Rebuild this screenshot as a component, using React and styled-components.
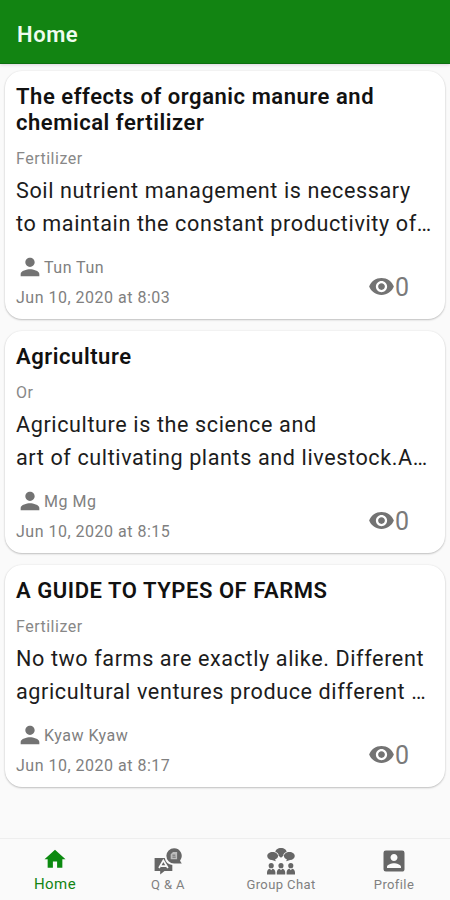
import React from "react";
import styled, { createGlobalStyle } from "styled-components";

const GlobalStyle = createGlobalStyle`
  body {
    margin: 0;
    background-color: #fafafa;
    font-family: Roboto, "Liberation Sans", sans-serif;
  }
`;
const Screen = styled.div`
  height: 900px;
  display: flex;
  flex-direction: column;
  overflow: hidden;
  background-color: #fafafa;
`;
const Header = styled.header`
  height: 64px;
  flex-shrink: 0;
  display: flex;
  align-items: center;
  padding: 6px 17px 0;
  box-sizing: border-box;
  background-color: #128412;
  border-bottom: 1px solid #0d6f10;
  box-shadow: 0 1px 3px rgba(60, 0, 60, 0.15);
`;
const HeaderTitle = styled.h1`
  margin: 0;
  font-size: 22px;
  font-weight: 600;
  letter-spacing: 0.55px;
  color: #effcef;
`;
const Feed = styled.main`
  flex: 1;
  display: flex;
  flex-direction: column;
  gap: 12px;
  padding: 7px 5px 0;
`;
const Card = styled.article`
  display: flex;
  flex-direction: column;
  padding: 13.25px 11px 10.5px;
  border-radius: 17px;
  background-color: white;
  box-shadow: 0 1px 2px rgba(0, 0, 0, 0.22), 0 0 2px rgba(0, 0, 0, 0.08);
`;
const Title = styled.h2`
  margin: 0;
  font-size: 22px;
  line-height: 25.5px;
  font-weight: 600;
  letter-spacing: 0.55px;
  white-space: pre-line;
  color: #111111;
`;
const Category = styled.span`
  margin-top: 13.5px;
  font-size: 16px;
  line-height: 20px;
  letter-spacing: 0.5px;
  color: #888888;
`;
const Excerpt = styled.p`
  margin: 5.25px 0 0;
  font-size: 21.6px;
  line-height: 33px;
  letter-spacing: 0.6px;
  white-space: pre;
  color: #1c1c1c;
`;
const CardFooter = styled.div`
  display: flex;
  align-items: center;
  justify-content: space-between;
  margin-top: 18px;
  padding-right: 25px;
`;
const Meta = styled.div`
  display: flex;
  flex-direction: column;
  gap: 10px;
`;
const MetaText = styled.div`
  display: flex;
  align-items: center;
  font-size: 16px;
  line-height: 20px;
  letter-spacing: 0.5px;
  color: #808080;
`;
const PersonIcon = styled.svg`
  width: 28px;
  height: 28px;
  margin: -5px 0 -3px;
  fill: #737373;
`;
const Views = styled.div`
  display: flex;
  align-items: center;
  padding-top: 10px;
  font-size: 25px;
  line-height: 30px;
  color: #7a7a7a;
`;
const EyeIcon = styled.svg`
  width: 27px;
  height: 27px;
  margin-top: -3px;
  fill: #737373;
`;
const TabBar = styled.nav`
  height: 62px;
  flex-shrink: 0;
  display: flex;
  box-sizing: border-box;
  margin: 0 -1px;
  border-top: 1px solid #eeeeee;
`;
const Tab = styled.button`
  flex: 1 1 0;
  min-width: 0;
  display: flex;
  flex-direction: column;
  align-items: center;
  padding: ${(props) => (props.$active ? "8px" : "9px")} 1px 0 0;
  border: none;
  background: none;
  font-family: inherit;
  font-size: ${(props) => (props.$active ? "15px" : "13px")};
  line-height: 18px;
  letter-spacing: 0.4px;
  color: ${(props) => (props.$active ? "#128412" : "#808080")};
`;
const TabIcon = styled.svg`
  width: 28px;
  height: 28px;
  margin-top: -1px;
  margin-bottom: 1px;
  fill: ${(props) => (props.$active ? "#0c8a10" : "#666666")};
`;

const posts = [
  {
    title: "The effects of organic manure and\nchemical fertilizer",
    category: "Fertilizer",
    excerpt:
      "Soil nutrient management is necessary\nto maintain the constant productivity of…",
    author: "Tun Tun",
    date: "Jun 10, 2020 at 8:03",
    views: 0,
  },
  {
    title: "Agriculture",
    category: "Or",
    excerpt:
      "Agriculture is the science and\nart of cultivating plants and livestock.A…",
    author: "Mg Mg",
    date: "Jun 10, 2020 at 8:15",
    views: 0,
  },
  {
    title: "A GUIDE TO TYPES OF FARMS",
    category: "Fertilizer",
    excerpt:
      "No two farms are exactly alike. Different\nagricultural ventures produce different …",
    author: "Kyaw Kyaw",
    date: "Jun 10, 2020 at 8:17",
    views: 0,
  },
];

const tabs = [
  {
    label: "Home",
    icon: (
      <path
        d="M10 20v-6h4v6h5v-8h3L12 3 2 12h3v8z"
        transform="translate(1.2 .6) scale(.9)"
      />
    ),
  },
  {
    label: "Q & A",
    icon: (
      <>
        <path d="M0.5 9.500h8.700a7.500 7.500 0 0 0 6.500 6V20.500H9L5.300 23.500v-3H.5z" />
        <path d="M17.200 1a6.600 6.600 0 1 0 0 13.200h6.600l-1.500-2.500A6.600 6.600 0 0 0 17.200 1z" />
        <path
          d="M4.300 18 8 11.500l3.900 6.500M6 16.300h4.500"
          fill="none"
          stroke="#fafafa"
          strokeWidth="1.5"
        />
        <path d="M14.300 10.400V6.200l2-1.900h3.500v6.100z" fill="#bdbdbd" />
        <path
          d="M15.800 7h2.500M15.800 8.700h2.800"
          fill="none"
          stroke="#666666"
          strokeWidth=".8"
        />
      </>
    ),
  },
  {
    label: "Group Chat",
    icon: (
      <>
        <path d="M12 .8c-2.800 0-4.800 1.500-4.800 3.400C9.200 4.700 10.200 6 9.900 7.400l2.100 1.900 2.100-1.900c-.3-1.400.7-2.700 2.700-3.200 0-1.900-2-3.400-4.800-3.400z" />
        <path d="M4.800 4.300C2.100 4.300.2 5.800.2 7.700s1.800 3.400 4 3.400l3.300 1.200-.5-1.700c1.500-.6 2.500-1.600 2.500-2.900 0-1.900-2-3.400-4.700-3.400z" />
        <path d="M19.200 4.300c2.700 0 4.600 1.500 4.600 3.400s-1.800 3.400-4 3.400l-3.300 1.200.5-1.700c-1.500-.6-2.500-1.600-2.500-2.900 0-1.900 2-3.400 4.700-3.400z" />
        {[3.6, 12, 20.4].map((x) => (
          <g key={x} transform={`translate(${x} 0)`}>
            <circle cx="0" cy="16" r="2.200" />
            <path d="M-3.600 23.500v-1.700c0-1.800 1.300-2.900 2.500-3.100L0 20l1.100-1.300c1.200.2 2.500 1.300 2.500 3.100v1.700z" />
          </g>
        ))}
      </>
    ),
  },
  {
    label: "Profile",
    icon: (
      <path d="M3 5v14a2 2 0 0 0 2 2h14c1.100 0 2-.9 2-2V5a2 2 0 0 0-2-2H5a2 2 0 0 0-2 2zm12 4c0 1.660-1.340 3-3 3s-3-1.340-3-3 1.340-3 3-3 3 1.340 3 3zm-9 8c0-2 4-3.100 6-3.100s6 1.100 6 3.100v1H6v-1z" />
    ),
  },
];

const PostCard = ({ post }) => (
  <Card>
    <Title>{post.title}</Title>
    <Category>{post.category}</Category>
    <Excerpt>{post.excerpt}</Excerpt>
    <CardFooter>
      <Meta>
        <MetaText>
          <PersonIcon viewBox="0 0 24 24">
            <path d="M12 12c2.210 0 4-1.790 4-4s-1.790-4-4-4-4 1.790-4 4 1.790 4 4 4zm0 2c-2.670 0-8 1.340-8 4v2h16v-2c0-2.660-5.330-4-8-4z" />
          </PersonIcon>
          {post.author}
        </MetaText>
        <MetaText>{post.date}</MetaText>
      </Meta>
      <Views>
        <EyeIcon viewBox="0 0 24 24">
          <path d="M12 4.500C7 4.500 2.730 7.610 1 12c1.730 4.390 6 7.500 11 7.500s9.270-3.110 11-7.500c-1.730-4.390-6-7.500-11-7.500zM12 17c-2.760 0-5-2.240-5-5s2.240-5 5-5 5 2.240 5 5-2.240 5-5 5zm0-8c-1.660 0-3 1.340-3 3s1.340 3 3 3 3-1.340 3-3-1.340-3-3-3z" />
        </EyeIcon>
        {post.views}
      </Views>
    </CardFooter>
  </Card>
);

const App = () => {
  return (
    <Screen>
      <GlobalStyle />
      <Header>
        <HeaderTitle>Home</HeaderTitle>
      </Header>
      <Feed>
        {posts.map((post) => (
          <PostCard key={post.title} post={post} />
        ))}
      </Feed>
      <TabBar>
        {tabs.map((tab) => (
          <Tab key={tab.label} $active={tab.label === "Home"}>
            <TabIcon viewBox="0 0 24 24" $active={tab.label === "Home"}>
              {tab.icon}
            </TabIcon>
            {tab.label}
          </Tab>
        ))}
      </TabBar>
    </Screen>
  );
};
export default App;
